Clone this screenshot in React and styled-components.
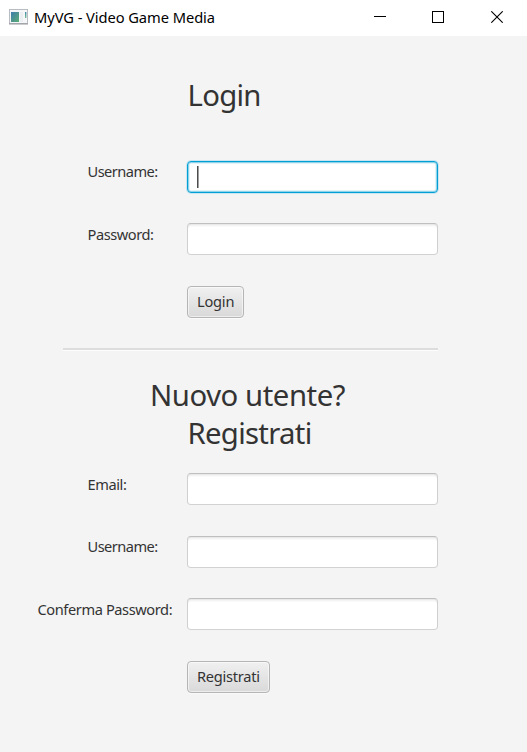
import React from "react";
import styled, { createGlobalStyle } from "styled-components";

const GlobalStyle = createGlobalStyle`
  * { box-sizing: border-box; }
  body {
    margin: 0;
    background: #f4f4f4;
    color: #333333;
    font-family: "Segoe UI", "Noto Sans", sans-serif;
    overflow: hidden;
  }
`;

const Window = styled.div`
  width: 527px;
  height: 752px;
  display: flex;
  flex-direction: column;
  background: #f4f4f4;
`;

const TitleBar = styled.header`
  height: 36px;
  flex: none;
  display: flex;
  align-items: center;
  padding-left: 9px;
  padding-right: 1px;
  background: #ffffff;
  color: #000000;
`;

const AppIcon = styled.svg`
  width: 19px;
  height: 16px;
  margin-top: -2px;
  margin-right: 6px;
`;

const Title = styled.span`
  flex: 1;
  margin-top: -2px;
  font-size: 14.7px;
  line-height: 20px;
  letter-spacing: -0.07px;
  white-space: nowrap;
`;

const Caption = styled.button`
  width: 58.5px;
  height: 36px;
  padding: 0;
  border: 0;
  display: flex;
  align-items: center;
  justify-content: center;
  background: transparent;
  svg { display: block; margin-top: -2px; }
`;

const Form = styled.main`
  display: flex;
  flex-direction: column;
  padding-top: 37px;
`;

const Heading = styled.h1`
  margin: 0;
  padding-left: ${(p) => p.$indent}px;
  height: ${(p) => p.$height}px;
  font-size: 29.3px;
  font-weight: 400;
  line-height: ${(p) => p.$line || 44}px;
  letter-spacing: ${(p) => p.$tracking}px;
  white-space: nowrap;
`;

const Row = styled.div`
  display: grid;
  grid-template-columns: 187px 251px;
  align-items: start;
  height: 62.5px;
`;

const Label = styled.label`
  padding-left: ${(p) => p.$indent}px;
  font-size: 14.6px;
  line-height: ${(p) => p.$line || 22}px;
  letter-spacing: ${(p) => p.$tracking}px;
  white-space: nowrap;
`;

const Field = styled.div`
  height: 32px;
  border: 1px solid;
  border-color: ${(p) => (p.$focused ? "#039ed3" : "#bfbfbf #cfcfcf #d2d2d2")};
  border-radius: 4px;
  background: #ffffff;
  padding: 4px 0 0 9px;
  box-shadow: ${(p) =>
    p.$focused
      ? "0 0 0 1px #c9e6f0, inset 0 0 0 1px #8fd3ea, inset 0 0 0 2px #e3f4f9"
      : "inset 0 1px 0 #e9e9e9, inset 0 2px 0 #f4f4f4, inset 0 3px 0 #fafafa"};
`;

const Caret = styled.div`
  width: 2px;
  height: 22px;
  background: linear-gradient(90deg, #4d4d4d 50%, #a0a0a0 50%);
`;

const Button = styled.button`
  grid-column: 2;
  justify-self: start;
  width: ${(p) => p.$width}px;
  height: 32px;
  padding: 0 0 1px 9px;
  text-align: left;
  border: 1px solid #b5b5b5;
  border-radius: 4px;
  background: linear-gradient(#f0f0f0, #d9d9d9);
  box-shadow: inset 0 0 0 1px rgba(255, 255, 255, 0.55), 0 1px 0 #fafafa;
  color: #333333;
  font-family: inherit;
  font-size: 14.6px;
  line-height: 22px;
  letter-spacing: ${(p) => p.$tracking}px;
  white-space: nowrap;
`;

const Separator = styled.hr`
  width: 375px;
  height: 3px;
  margin: 0 0 23px 62.5px;
  border: 0;
  background: linear-gradient(#dddddd 66.6%, #fdfdfd 66.6%);
`;

export default function App() {
  return (
    <Window>
      <GlobalStyle />
      <TitleBar>
        <AppIcon viewBox="0 0 19 16">
          <defs>
            <linearGradient id="screen" x1="0" y1="0" x2="1" y2="1">
              <stop offset="0" stopColor="#3d7dab" />
              <stop offset="1" stopColor="#5cac73" />
            </linearGradient>
            <linearGradient id="bar" x1="0" y1="0" x2="0" y2="1">
              <stop offset="0" stopColor="#4589a8" />
              <stop offset="1" stopColor="#79bd93" />
            </linearGradient>
          </defs>
          <rect x="0.5" y="0.5" width="18" height="14.5" fill="#f5f6f7" stroke="#b9bcc2" />
          <rect x="0" y="14" width="19" height="1.3" fill="#a2a5ab" />
          <rect x="2" y="3" width="8" height="10" fill="url(#screen)" />
          <rect x="11" y="3" width="3" height="10" fill="#eceff1" />
          <rect x="16" y="3" width="1.4" height="6" fill="url(#bar)" />
        </AppIcon>
        <Title>MyVG - Video Game Media</Title>
        <Caption aria-label="Minimize">
          <svg width="12" height="12" shapeRendering="crispEdges">
            <path d="M0 5.5h12" stroke="#000" />
          </svg>
        </Caption>
        <Caption aria-label="Maximize">
          <svg width="12" height="12" shapeRendering="crispEdges">
            <rect x="0.5" y="0.5" width="11" height="11" fill="none" stroke="#000" />
          </svg>
        </Caption>
        <Caption aria-label="Close">
          <svg width="12" height="12">
            <path d="M0.3 0.3l11.4 11.4M11.7 0.3L0.3 11.7" stroke="#000" strokeWidth="1.1" />
          </svg>
        </Caption>
      </TitleBar>
      <Form>
        <Heading $indent={187.5} $height={87.5} $tracking={-0.7}>Login</Heading>
        <Row>
          <Label $indent={87.5} $tracking={-0.54} $line={20}>Username:</Label>
          <Field $focused><Caret /></Field>
        </Row>
        <Row>
          <Label $indent={87.5} $tracking={-0.44}>Password:</Label>
          <Field />
        </Row>
        <Row>
          <Button $width={57} $tracking={-0.2}>Login</Button>
        </Row>
        <Separator />
        <Heading $indent={150} $height={38} $line={42} $tracking={-0.45}>Nuovo utente?</Heading>
        <Heading $indent={187.5} $height={61} $line={42} $tracking={-0.7}>Registrati</Heading>
        <Row>
          <Label $indent={87.5} $tracking={-0.4}>Email:</Label>
          <Field />
        </Row>
        <Row>
          <Label $indent={87.5} $tracking={-0.54} $line={20}>Username:</Label>
          <Field />
        </Row>
        <Row>
          <Label $indent={37.5} $tracking={-0.4}>Conferma Password:</Label>
          <Field />
        </Row>
        <Row>
          <Button $width={83} $tracking={-0.25}>Registrati</Button>
        </Row>
      </Form>
    </Window>
  );
}
